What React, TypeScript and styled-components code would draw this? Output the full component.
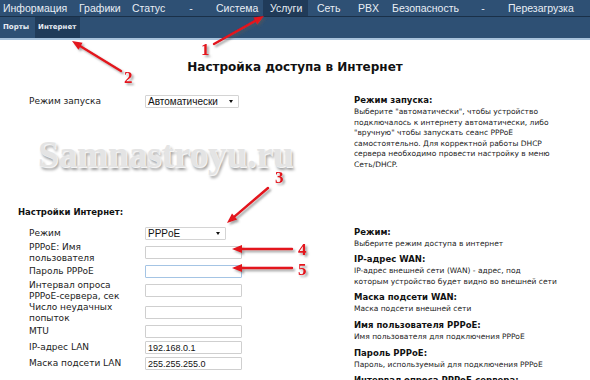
import styled, { createGlobalStyle } from "styled-components";

const GlobalStyle = createGlobalStyle`
  html, body {
    margin: 0;
    padding: 0;
    background: #fff;
  }
  body {
    font-family: "DejaVu Sans", Verdana, sans-serif;
    color: #111;
    width: 590px;
    height: 380px;
    overflow: hidden;
  }
`;

const Page = styled.div`
  position: relative;
  width: 590px;
  height: 380px;
  overflow: hidden;
`;

const TopNav = styled.div`
  display: flex;
  height: 16px;
  background: #2e5074;
  border-bottom: 1px solid #1a3048;
`;

const NavItem = styled.div<{ $w: number; $active?: boolean; $center?: boolean; $pad?: number }>`
  box-sizing: border-box;
  width: ${(p) => p.$w}px;
  padding-left: ${(p) => (p.$center ? 0 : p.$pad ?? 6)}px;
  text-align: ${(p) => (p.$center ? "center" : "left")};
  font-family: "Liberation Sans", Arial, sans-serif;
  font-size: 10.5px;
  line-height: 16px;
  color: #e8eef5;
  white-space: nowrap;
  background: ${(p) => (p.$active ? "#203b59" : "transparent")};
`;

const SubNav = styled.div`
  display: flex;
  height: 21px;
  background: #2e5074;
  border-bottom: 2px solid #a9c3dc;
`;

const SubItem = styled.div<{ $active?: boolean }>`
  padding: 0 4px 0 3px;
  margin-right: 2px;
  font-family: "DejaVu Sans", Verdana, sans-serif;
  font-size: 7px;
  font-weight: bold;
  line-height: 21px;
  color: #e8eef5;
  background: ${(p) => (p.$active ? "#203b59" : "transparent")};
`;

const Title = styled.h1`
  margin: 20px 0 19px;
  text-align: center;
  font-size: 12px;
  line-height: 14px;
  font-weight: bold;
  color: #111;
`;

const Main = styled.div`
  padding-left: 18px;
`;

const Columns = styled.div<{ $mb?: number }>`
  display: grid;
  grid-template-columns: 336px 1fr;
  margin-bottom: ${(p) => p.$mb ?? 0}px;
`;

const Rows = styled.div`
  display: flex;
  flex-direction: column;
`;

const FormRow = styled.div`
  display: grid;
  grid-template-columns: 116px auto;
  align-items: center;
  min-height: 16px;
  padding-left: 11px;
`;

const Label = styled.div`
  font-size: 9px;
  line-height: 11px;
  color: #222;
  white-space: pre-line;
`;

const Field = styled.input<{ $focus?: boolean }>`
  box-sizing: border-box;
  width: 97px;
  height: 13px;
  margin: 0;
  padding: 0 2px;
  border: 1px solid ${(p) => (p.$focus ? "#a4c4e4" : "#cfcfcf")};
  border-radius: 1px;
  background: #fff;
  font-family: "Liberation Sans", Arial, sans-serif;
  font-size: 9px;
  color: #111;
  outline: none;
`;

const SelectBox = styled.div<{ $w: number }>`
  position: relative;
  box-sizing: border-box;
  width: ${(p) => p.$w}px;
  height: 13px;
  padding-left: 2px;
  border: 1px solid #d4d4d4;
  border-radius: 1px;
  background: #fff;
  font-family: "Liberation Sans", Arial, sans-serif;
  font-size: 10px;
  line-height: 11px;
  color: #111;
  &::after {
    content: "";
    position: absolute;
    right: 5px;
    top: 4px;
    border-left: 2.5px solid transparent;
    border-right: 2.5px solid transparent;
    border-top: 3px solid #111;
  }
`;

const Heading = styled.div`
  font-size: 8.5px;
  font-weight: bold;
  line-height: 12px;
  margin-bottom: 8px;
  color: #111;
`;

const Help = styled.div<{ $pt?: number }>`
  padding-top: ${(p) => p.$pt ?? 0}px;
`;

const HelpEntry = styled.div`
  margin-bottom: 4px;
`;

const HelpTitle = styled.div`
  font-size: 8.5px;
  font-weight: bold;
  line-height: 12px;
  margin-bottom: 1px;
  color: #111;
`;

const HelpLine = styled.div`
  font-size: 7.5px;
  line-height: 10.6px;
  white-space: nowrap;
  color: #222;
`;

const Watermark = styled.div`
  position: absolute;
  left: 38px;
  top: 133px;
  font-family: "Liberation Serif", "Times New Roman", serif;
  font-size: 37px;
  font-weight: bold;
  color: #e4e4e4;
  text-shadow: 1px 1px 0 #f4f4f4, 2px 3px 3px #9a9a9a;
  pointer-events: none;
`;

const Overlay = styled.svg`
  position: absolute;
  left: 0;
  top: 0;
  pointer-events: none;
`;

const navItems = [
  { t: "Информация", w: 73, pad: 3 },
  { t: "Графики", w: 53 },
  { t: "Статус", w: 46 },
  { t: "-", w: 38, center: true },
  { t: "Система", w: 53 },
  { t: "Услуги", w: 45, active: true, pad: 7 },
  { t: "Сеть", w: 43, pad: 9 },
  { t: "PBX", w: 35, pad: 7 },
  { t: "Безопасность", w: 80 },
  { t: "-", w: 34, center: true },
  { t: "Перезагрузка", w: 90, pad: 8 },
];

const helpMain = [
  {
    title: "Режим:",
    lines: ["Выберите режим доступа в интернет"],
  },
  {
    title: "IP-адрес WAN:",
    lines: [
      "IP-адрес внешней сети (WAN) - адрес, под",
      "которым устройство будет видно во внешней сети",
    ],
  },
  { title: "Маска подсети WAN:", lines: ["Маска подсети внешней сети"] },
  {
    title: "Имя пользователя PPPoE:",
    lines: ["Имя пользователя для подключения PPPoE"],
  },
  {
    title: "Пароль PPPoE:",
    lines: ["Пароль, используемый для подключения PPPoE"],
  },
  {
    title: "Интервал опроса PPPoE-сервера:",
    lines: ["Интервал опроса PPPoE-сервера в секундах"],
  },
];

type Arrow = { n: string; from: [number, number]; to: [number, number]; at: [number, number] };

const arrows: Arrow[] = [
  { n: "1", from: [214, 44], to: [264, 16], at: [201, 55] },
  { n: "2", from: [121, 71], to: [72, 41], at: [124, 83] },
  { n: "3", from: [268, 188], to: [227, 223], at: [275, 183] },
  { n: "4", from: [292, 249], to: [232, 249], at: [298, 255] },
  { n: "5", from: [292, 268], to: [232, 268], at: [298, 275] },
];

function ArrowShape({ a }: { a: Arrow }) {
  const [x1, y1] = a.from;
  const [x2, y2] = a.to;
  const dx = x2 - x1;
  const dy = y2 - y1;
  const len = Math.hypot(dx, dy);
  const ux = dx / len;
  const uy = dy / len;
  const hl = 10;
  const hw = 4;
  const bx = x2 - ux * hl;
  const by = y2 - uy * hl;
  const pts = `${x2},${y2} ${bx - uy * hw},${by + ux * hw} ${bx + uy * hw},${by - ux * hw}`;
  return (
    <g filter="url(#shade)">
      <line x1={x1} y1={y1} x2={bx + ux} y2={by + uy} stroke="#e3121b" strokeWidth={2.4} strokeLinecap="round" />
      <polygon points={pts} fill="#e3121b" />
      <text x={a.at[0]} y={a.at[1]} fill="#e3121b" fontFamily="'Liberation Serif', serif" fontSize={17} fontWeight="bold">
        {a.n}
      </text>
    </g>
  );
}

export default function App() {
  return (
    <Page>
      <GlobalStyle />
      <TopNav>
        {navItems.map((n, i) => (
          <NavItem key={i} $w={n.w} $pad={n.pad} $center={n.center} $active={n.active}>
            {n.t}
          </NavItem>
        ))}
      </TopNav>
      <SubNav>
        <SubItem>Порты</SubItem>
        <SubItem $active>Интернет</SubItem>
      </SubNav>

      <Title>Настройка доступа в Интернет</Title>

      <Main>
        <Columns $mb={31}>
          <Rows>
            <FormRow>
              <Label>Режим запуска</Label>
              <SelectBox $w={94}>Автоматически</SelectBox>
            </FormRow>
          </Rows>
          <Help $pt={1}>
            <HelpEntry>
              <HelpTitle>Режим запуска:</HelpTitle>
              <HelpLine>Выберите "автоматически", чтобы устройство</HelpLine>
              <HelpLine>подключалось к интернету автоматически, либо</HelpLine>
              <HelpLine>"вручную" чтобы запускать сеанс PPPoE</HelpLine>
              <HelpLine>самостоятельно. Для корректной работы DHCP</HelpLine>
              <HelpLine>сервера необходимо провести настройку в меню</HelpLine>
              <HelpLine>Сеть/DHCP.</HelpLine>
            </HelpEntry>
          </Help>
        </Columns>

        <Heading>Настройки Интернет:</Heading>
        <Columns>
          <Rows>
            <FormRow>
              <Label>Режим</Label>
              <SelectBox $w={81}>PPPoE</SelectBox>
            </FormRow>
            <FormRow>
              <Label>{"PPPoE: Имя\nпользователя"}</Label>
              <Field defaultValue="" />
            </FormRow>
            <FormRow>
              <Label>Пароль PPPoE</Label>
              <Field $focus type="password" defaultValue="" />
            </FormRow>
            <FormRow>
              <Label>{"Интервал опроса\nPPPoE-сервера, сек"}</Label>
              <Field defaultValue="" />
            </FormRow>
            <FormRow>
              <Label>{"Число неудачных\nпопыток"}</Label>
              <Field defaultValue="" />
            </FormRow>
            <FormRow>
              <Label>MTU</Label>
              <Field defaultValue="" />
            </FormRow>
            <FormRow>
              <Label>IP-адрес LAN</Label>
              <Field defaultValue="192.168.0.1" />
            </FormRow>
            <FormRow>
              <Label>Маска подсети LAN</Label>
              <Field defaultValue="255.255.255.0" />
            </FormRow>
          </Rows>
          <Help>
            {helpMain.map((h) => (
              <HelpEntry key={h.title}>
                <HelpTitle>{h.title}</HelpTitle>
                {h.lines.map((l) => (
                  <HelpLine key={l}>{l}</HelpLine>
                ))}
              </HelpEntry>
            ))}
          </Help>
        </Columns>
      </Main>

      <Watermark>Samnastroyu.ru</Watermark>

      <Overlay width={590} height={380}>
        <defs>
          <filter id="shade" x="-20%" y="-20%" width="140%" height="140%">
            <feDropShadow dx={2} dy={2} stdDeviation={1.2} floodColor="#555" floodOpacity={0.55} />
          </filter>
        </defs>
        {arrows.map((a) => (
          <ArrowShape key={a.n} a={a} />
        ))}
      </Overlay>
    </Page>
  );
}
